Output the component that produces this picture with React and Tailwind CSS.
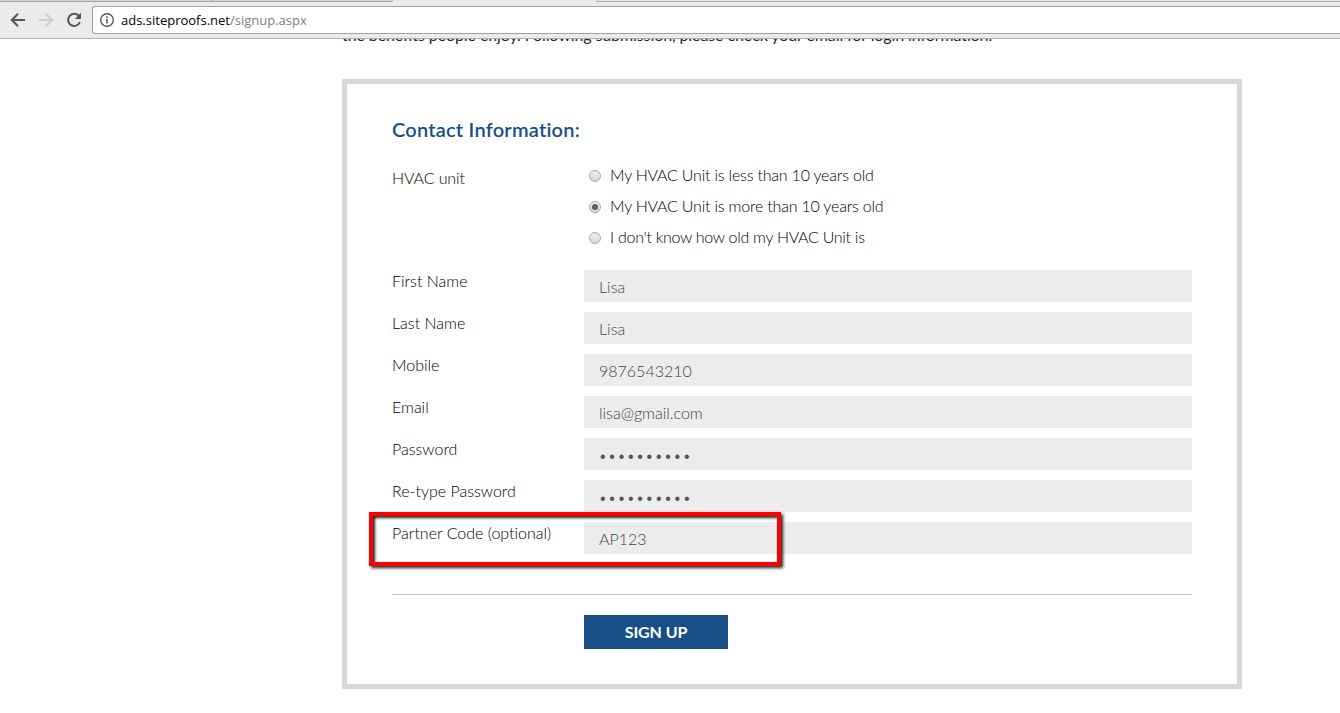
const fields = [
  { label: 'First Name', value: 'Lisa' },
  { label: 'Last Name', value: 'Lisa' },
  { label: 'Mobile', value: '9876543210' },
  { label: 'Email', value: 'lisa@gmail.com' },
  { label: 'Password', value: '••••••••••', secret: true },
  { label: 'Re-type Password', value: '••••••••••', secret: true },
  { label: 'Partner Code (optional)', value: 'AP123', marked: true },
];

const options = [
  { text: 'My HVAC Unit is less than 10 years old' },
  { text: 'My HVAC Unit is more than 10 years old', checked: true },
  { text: "I don't know how old my HVAC Unit is", tracking: 'tracking-[-0.28px]' },
];

function Toolbar() {
  return (
    <header className="flex h-[39px] flex-col border-b border-[#b0aeb0] bg-[#ebebeb]">
      <div className="flex h-[2px] shrink-0">
        <div className="w-[211px] border-b border-[#a8a8a8] bg-[#d2d2d2]" />
        <div className="w-[182px] border-b border-l border-[#a8a8a8] bg-[#d2d2d2]" />
        <div className="w-[203px]" />
        <div className="grow border-b border-[#b0b0b0] bg-[#e2e4e2]" />
      </div>
      <div className="flex h-[36px] pt-1">
        <div className="flex w-[92px] shrink-0 items-start pt-[5px] pl-[9px]">
          <svg width="18" height="18" viewBox="0 0 18 18" fill="none" stroke="#555" strokeWidth="2">
            <path d="M16 9H3M9 2.8L2.8 9L9 15.2" />
          </svg>
          <svg className="ml-[10px]" width="18" height="18" viewBox="0 0 18 18" fill="none" stroke="#cdcdcd" strokeWidth="2">
            <path d="M2 9H15M9 2.8L15.2 9L9 15.2" />
          </svg>
          <svg className="ml-[10px]" width="18" height="18" viewBox="0 0 18 18" fill="none">
            <path d="M14 5.1A6.1 6.1 0 1 0 14.9 11" stroke="#555" strokeWidth="2" />
            <path d="M16 1.8V8H9.8Z" fill="#555" />
          </svg>
        </div>
        <div className="flex h-[28px] grow items-center rounded-l-[3px] border border-r-0 border-[#a2a2a2] bg-white pl-[6px]">
          <svg width="16" height="16" viewBox="0 0 16 16" fill="none" stroke="#5a5a5a">
            <circle cx="8" cy="8" r="6.3" strokeWidth="1.4" />
            <path d="M8 7V11.5M8 4.3V6" strokeWidth="1.6" />
          </svg>
          <span className="ml-[6px] font-['Open_Sans',sans-serif] text-[13px] leading-[20px] font-normal whitespace-nowrap text-black">
            ads.siteproofs.net<span className="text-[#808080]">/signup.aspx</span>
          </span>
        </div>
      </div>
    </header>
  );
}

function Radio({ checked }) {
  return (
    <span className="flex size-[12px] items-center justify-center rounded-full border border-[#a8a8a8] bg-linear-to-b from-[#eeeeee] to-[#d9d9d9]">
      {checked && <span className="size-[6px] rounded-full bg-[#5c5c5c]" />}
    </span>
  );
}

function Field({ label, value, secret, marked }) {
  return (
    <div className="relative flex h-8">
      <label className="w-[192px] shrink-0 text-[16px] leading-[22px] text-black">{label}</label>
      <div className="flex h-8 grow items-center bg-[#ececec] pl-[15px] text-[#444]">
        {secret ? (
          <span className="pt-[5px] pl-px font-['Liberation_Sans',sans-serif] text-[16px] leading-[20px] font-normal tracking-[3.72px] text-[#555]">{value}</span>
        ) : (
          <span className="pt-px">{value}</span>
        )}
      </div>
      {marked && (
        <div className="absolute -top-[10px] -left-[23px] h-[54px] w-[412px] border-4 border-[#fe0000] shadow-[2px_2px_3px_#222,inset_2px_2px_3px_#222]" />
      )}
    </div>
  );
}

export default function App() {
  return (
    <div className="h-[713px] w-[1340px] overflow-hidden bg-white font-['Lato',sans-serif] text-[16px] font-light [font-variant-ligatures:none]">
      <Toolbar />
      <main className="ml-[342px] w-[900px]">
        <div className="flex h-10 items-start overflow-hidden">
          <p className="-mt-[16px] leading-[24px] font-normal tracking-[-0.1px] whitespace-nowrap text-[#222]">
            the benefits people enjoy. Following submission, please check your email for login information.
          </p>
        </div>
        <section className="h-[610px] border-[5px] border-[#d8d8d8] px-[45px] pt-[30px]">
          <h2 className="text-[20px] leading-[30px] font-semibold tracking-[0.22px] text-[#174f86]">Contact Information:</h2>
          <div className="mt-4 flex h-[110px]">
            <div className="w-[192px] pt-[6px] leading-[24px] tracking-[-0.1px] text-black">HVAC unit</div>
            <div className="flex flex-col">
              {options.map((o) => (
                <div key={o.text} className="flex h-[31px] items-center pl-[5px]">
                  <Radio checked={o.checked} />
                  <span className={`ml-[9px] pb-[2px] whitespace-nowrap text-black ${o.tracking || 'tracking-[-0.2px]'}`}>{o.text}</span>
                </div>
              ))}
            </div>
          </div>
          <div className="flex flex-col gap-[10px]">
            {fields.map((f) => (
              <Field key={f.label} {...f} />
            ))}
          </div>
          <div className="mt-10 border-t border-[#bbb] pt-5 pl-[192px]">
            <button className="block h-[34px] w-[144px] bg-[#174f86] text-[16px] font-bold tracking-[-0.1px] text-white">SIGN UP</button>
          </div>
        </section>
      </main>
    </div>
  );
}
